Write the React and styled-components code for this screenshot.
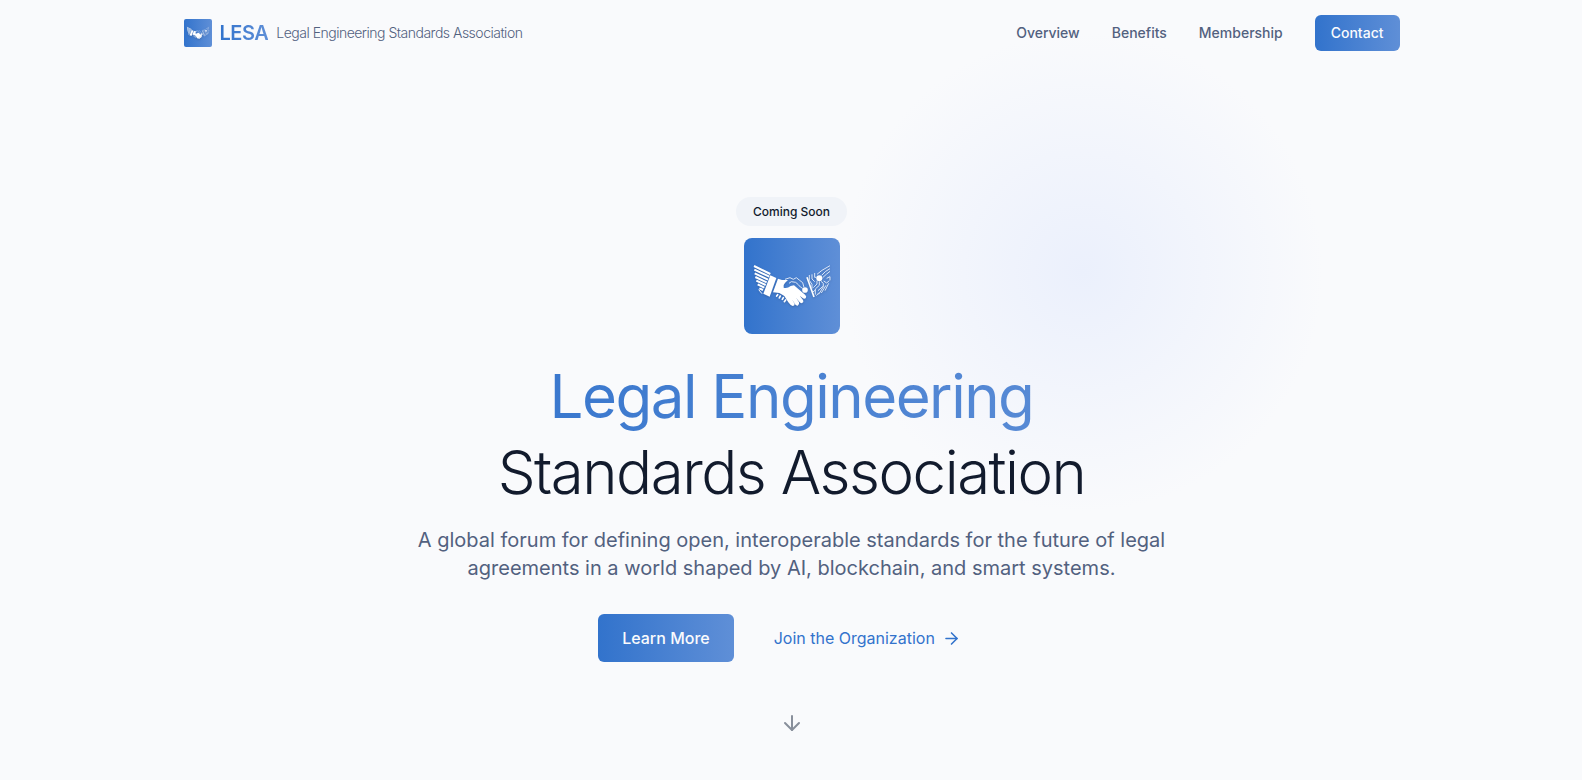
import React from "react";
import styled, { createGlobalStyle } from "styled-components";
import { ArrowDown, ArrowRight } from "lucide-react";

const brandGradient = "linear-gradient(90deg, #3273cc 0%, #5f8fd7 100%)";

const GlobalStyle = createGlobalStyle`
  *, *::before, *::after { box-sizing: border-box; }
  html, body { margin: 0; height: 100%; overflow: hidden; }
  body {
    background: #f9fafc;
    font-family: Inter, "Liberation Sans", sans-serif;
    color: #121b2d;
  }
  a { color: inherit; text-decoration: none; }
`;

const Page = styled.div`
  position: relative;
  width: 1583px;
  height: 780px;
  display: flex;
  flex-direction: column;
`;

const Glow = styled.div`
  position: absolute;
  left: 843px;
  top: 32px;
  width: 480px;
  height: 480px;
  border-radius: 50%;
  background: radial-gradient(circle closest-side, #ebf0fc 0%, rgba(235, 240, 252, 0) 100%);
`;

const Header = styled.header`
  position: relative;
  width: 1280px;
  height: 66px;
  margin: 0 auto;
  padding: 0 32px;
  display: flex;
  align-items: center;
  justify-content: space-between;
`;

const Brand = styled.a`
  display: flex;
  align-items: center;
  gap: 8px;
  letter-spacing: -0.5px;
`;

const LogoTile = styled.div`
  width: ${(p) => p.$size}px;
  height: ${(p) => p.$size}px;
  border-radius: ${(p) => p.$radius}px;
  background: ${brandGradient};
  overflow: hidden;

  svg { display: block; width: 100%; height: 100%; }
`;

const BrandName = styled.span`
  font-size: 20px;
  line-height: 28px;
  font-weight: 600;
  background: ${brandGradient};
  background-clip: text;
  color: transparent;
`;

const BrandTagline = styled.span`
  font-size: 14px;
  line-height: 20px;
  font-weight: 300;
  color: #52617f;
`;

const Nav = styled.nav`
  display: flex;
  align-items: center;
  gap: 32px;
`;

const NavLink = styled.a`
  font-size: 14px;
  line-height: 20px;
  font-weight: 500;
  color: #52617f;
`;

const Button = styled.a`
  display: inline-flex;
  align-items: center;
  justify-content: center;
  padding: ${(p) => (p.$large ? "12px 24px" : "8px 16px")};
  border-radius: 6px;
  font-size: ${(p) => (p.$large ? 16 : 14)}px;
  line-height: ${(p) => (p.$large ? 24 : 20)}px;
  font-weight: 500;
  color: #fafbfd;
  background: ${brandGradient};
`;

const Hero = styled.main`
  position: relative;
  flex: 1;
  display: flex;
  flex-direction: column;
  align-items: center;
  padding-top: 131px;
`;

const Badge = styled.div`
  padding: 6px 16.5px;
  margin-bottom: 12px;
  border-radius: 999px;
  background: #f0f3f8;
  font-size: 12px;
  line-height: 17px;
  font-weight: 500;
`;

const Title = styled.h1`
  margin: 24px 0 0;
  width: 768px;
  text-align: center;
  font-size: 60px;
  line-height: 76px;
  font-weight: 300;
  letter-spacing: -1.5px;
`;

const TitleAccent = styled.span`
  display: block;
  font-weight: 400;
  background: ${brandGradient};
  background-clip: text;
  color: transparent;
`;

const Lead = styled.p`
  margin: 16px 0 32px;
  width: 768px;
  text-align: center;
  font-size: 20px;
  line-height: 28px;
  color: #52617f;
`;

const Actions = styled.div`
  display: flex;
  gap: 16px;
`;

const TextLink = styled.a`
  display: inline-flex;
  align-items: center;
  gap: 7px;
  height: 48px;
  padding: 0 24px;
  font-size: 16px;
  color: #3273cc;
`;

const ScrollCue = styled.div`
  margin-top: 49px;
  height: 24px;
  color: #888f9b;

  svg { display: block; }
`;

const Emblem = styled.svg`
  filter: drop-shadow(0 1px 1px rgba(30, 50, 90, 0.3));
`;

function Handshake() {
  return (
    <Emblem viewBox="0 0 96 96" aria-hidden="true">
      <g transform="translate(6 17) scale(0.3333)" fill="none" stroke="#fff" strokeLinejoin="round">
        <path
          strokeWidth="6"
          d="M12 33L61 57M13 44L58 65M14 55L54 74M16 66L50 82M19 77L47 90M23 88L43 98M28 100L39 105"
        />
        <path strokeWidth="3" d="M26 104L36 116" />
        <path fill="#fff" stroke="none" d="M61 61L79 69L59 125L40 116Z" />
        <path
          fill="#fff"
          stroke="none"
          d="M84 71L96 75L114 75L105 84Q98 91 101 98Q111 102 122 93L132 91L166 120Q171 125 167 130Q162 133 157 128L149 122L159 135Q162 142 156 144Q151 146 146 138L138 128L147 142Q149 150 143 152Q137 153 133 144L126 133L134 147Q134 153 128 153Q122 152 115 142L103 123L88 114L69 112Z"
        />
        <path strokeWidth="3" stroke="#dce7f8" d="M105 73L120 68L130 73L139 68L149 76L158 83L162 97M117 85L124 80L137 82L145 89L151 96L158 100" />
        <path strokeWidth="5" strokeLinecap="round" d="M83 119L80 123M91 123L88 129M100 128L97 133M107 135L103 140" />
        <circle cx="165" cy="105" r="8.5" fill="#fff" stroke="none" />
        <path strokeWidth="5" d="M171 67L192 126" />
        <circle cx="208" cy="70" r="9" fill="#fff" stroke="none" />
        <path
          strokeWidth="3"
          stroke="#dce7f8"
          d="M178 60V76L186 88V101M186 58V72L194 80M194 54V67H200M201 58L216 46L240 32M215 61L227 49L240 41M218 68L229 58L240 49M230 70L240 65V76M208 79V91L196 102V119M201 77V87L190 98M213 79L220 85V93L204 107M221 78L230 84L238 77M228 91L214 114M236 85L225 107M221 94L206 118M189 111L196 105M199 122L207 113"
        />
      </g>
    </Emblem>
  );
}

export default function App() {
  return (
    <>
      <GlobalStyle />
      <Page>
        <Glow />
        <Header>
          <Brand href="#">
            <LogoTile $size={28} $radius={2}>
              <Handshake />
            </LogoTile>
            <BrandName>LESA</BrandName>
            <BrandTagline>Legal Engineering Standards Association</BrandTagline>
          </Brand>
          <Nav>
            <NavLink href="#overview">Overview</NavLink>
            <NavLink href="#benefits">Benefits</NavLink>
            <NavLink href="#membership">Membership</NavLink>
            <Button href="#contact">Contact</Button>
          </Nav>
        </Header>
        <Hero>
          <Badge>Coming Soon</Badge>
          <LogoTile $size={96} $radius={8}>
            <Handshake />
          </LogoTile>
          <Title>
            <TitleAccent>Legal Engineering</TitleAccent>
            Standards Association
          </Title>
          <Lead>
            A global forum for defining open, interoperable standards for the future of legal
            agreements in a world shaped by AI, blockchain, and smart systems.
          </Lead>
          <Actions>
            <Button $large href="#overview">Learn More</Button>
            <TextLink href="#membership">
              Join the Organization
              <ArrowRight size={19} />
            </TextLink>
          </Actions>
          <ScrollCue>
            <ArrowDown size={24} />
          </ScrollCue>
        </Hero>
      </Page>
    </>
  );
}
